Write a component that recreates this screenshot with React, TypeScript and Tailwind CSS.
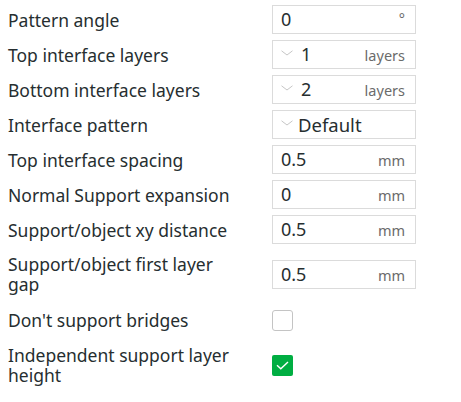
import React from 'react';

type Row =
    | { label: string; kind: 'input'; value: string; unit: string; spin?: boolean }
    | { label: string; kind: 'select'; value: string }
    | { label: string; kind: 'check'; checked: boolean };

const rows: Row[] = [
    { label: 'Pattern angle', kind: 'input', value: '0', unit: '°' },
    { label: 'Top interface layers', kind: 'input', value: '1', unit: 'layers', spin: true },
    { label: 'Bottom interface layers', kind: 'input', value: '2', unit: 'layers', spin: true },
    { label: 'Interface pattern', kind: 'select', value: 'Default' },
    { label: 'Top interface spacing', kind: 'input', value: '0.5', unit: 'mm' },
    { label: 'Normal Support expansion', kind: 'input', value: '0', unit: 'mm' },
    { label: 'Support/object xy distance', kind: 'input', value: '0.5', unit: 'mm' },
    { label: 'Support/object first layer gap', kind: 'input', value: '0.5', unit: 'mm' },
    { label: "Don't support bridges", kind: 'check', checked: false },
    { label: 'Independent support layer height', kind: 'check', checked: true },
];

// row heights taken from the screenshot
const heights = ['h-[35px]', 'h-[35px]', 'h-[35px]', 'h-[35px]', 'h-[35px]', 'h-[35px]', 'h-[35px]', 'h-[54px]', 'h-[38px]', 'h-[52px]'];

function Chevron() {
    return (
        <svg width="12" height="6" viewBox="0 0 12 6" className="mb-[3px] shrink-0">
            <path d="M0.5 0.8 L6 5 L11.5 0.8" fill="none" stroke="#c6c6c6" strokeWidth="1" />
        </svg>
    );
}

function Control({ row }: { row: Row }) {
    if (row.kind === 'check') {
        return row.checked ? (
            <div className="w-[21px] h-[21px] rounded-[2px] bg-[#00ae42] flex items-center justify-center">
                <svg width="13" height="9" viewBox="0 0 13 9">
                    <path d="M1 4.2 L4.8 7.8 L12 1" fill="none" stroke="#fff" strokeWidth="1.4" />
                </svg>
            </div>
        ) : (
            <div className="w-[21px] h-[21px] rounded-[3px] border-[1.5px] border-[#c4c4c4] bg-white" />
        );
    }
    return (
        <div className="w-[144px] h-[29px] border border-[#dbdbdb] bg-white flex items-center pl-[8px] pr-[10px]">
            {row.kind === 'select' ? (
                <>
                    <Chevron />
                    <span className="ml-[5px] text-[18.5px] text-[#262e30]">{row.value}</span>
                </>
            ) : (
                <>
                    {row.spin && <Chevron />}
                    <span className={`${row.spin ? 'ml-[8px]' : ''} text-[18px] text-[#262e30]`}>{row.value}</span>
                    <span
                        className={`ml-auto text-[14.5px] text-[#6b6b6b] ${row.unit === '°' ? 'self-start mt-[2px] text-[11px]' : 'mt-[3px]'}`}
                    >
                        {row.unit}
                    </span>
                </>
            )}
        </div>
    );
}

export default function App() {
    return (
        <div
            className="w-[461px] h-[402px] bg-white pt-[2px] text-[#262e30]"
            style={{ fontFamily: '"Noto Sans", "Open Sans", sans-serif' }}
        >
            {rows.map((row, i) => (
                <div key={row.label} className={`flex items-center ${heights[i]}`}>
                    <div className="w-[272px] pl-[8px] pr-[24px] text-[17.5px] leading-[20px]">{row.label}</div>
                    <Control row={row} />
                </div>
            ))}
        </div>
    );
}
